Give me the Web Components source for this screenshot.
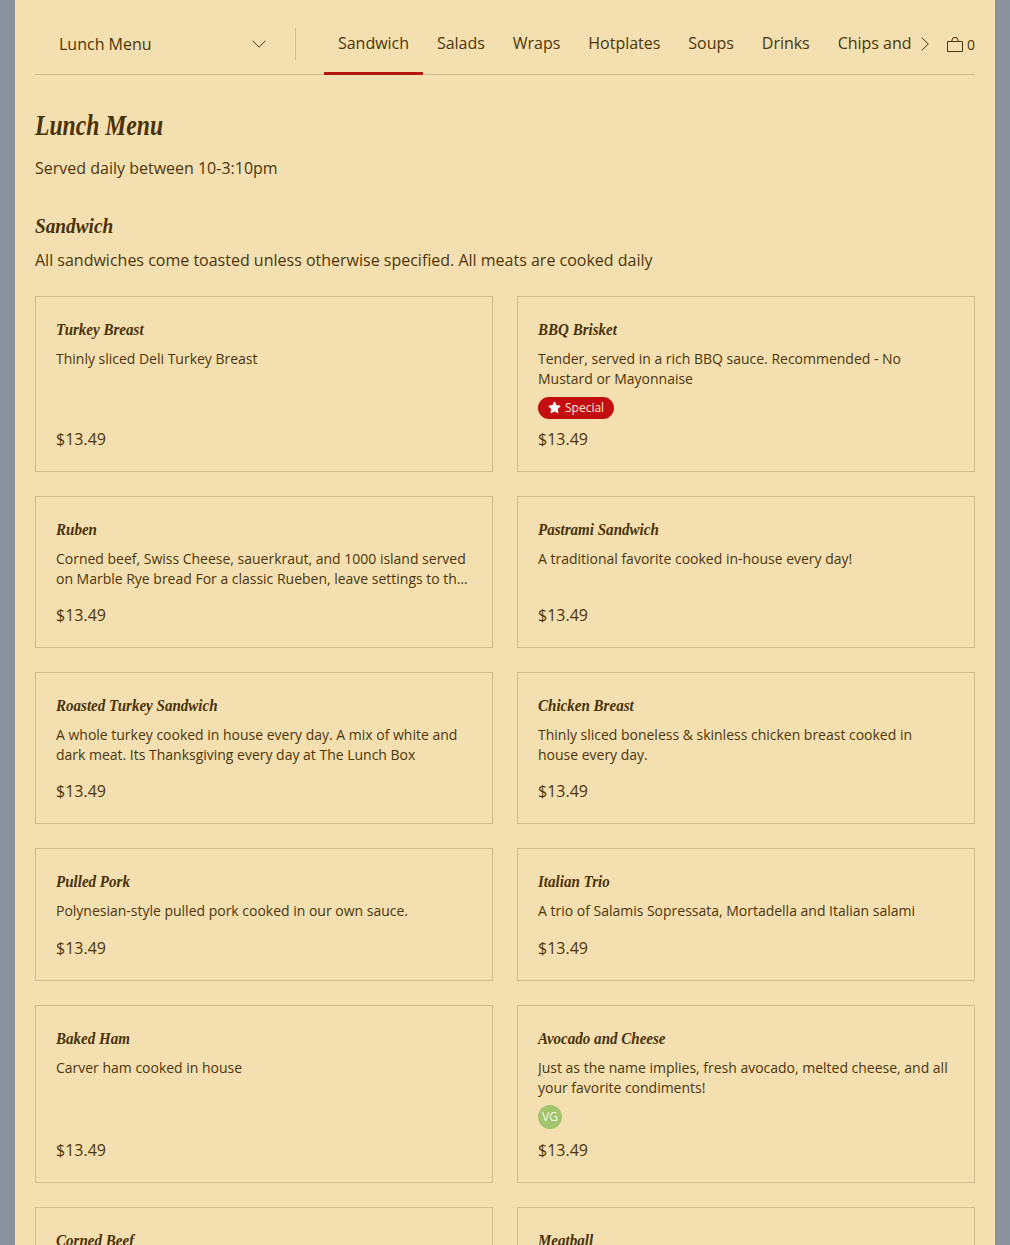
<!DOCTYPE html>
<html lang="en"><head><meta charset="utf-8"><title>Lunch Menu</title>
<style>
html,body{margin:0;padding:0;height:1245px;overflow:hidden;background:#8b929f}
body{font-family:"Open Sans","Liberation Sans",sans-serif;color:#4c360c}
</style></head><body>
<menu-app>
  <menu-header slot="header"></menu-header>
  <menu-intro title="Lunch Menu" note="Served daily between 10-3:10pm"></menu-intro>
  <menu-section title="Sandwich" note="All sandwiches come toasted unless otherwise specified. All meats are cooked daily">
    <menu-card title="Turkey Breast" desc="Thinly sliced Deli Turkey Breast"></menu-card>
    <menu-card title="BBQ Brisket" desc="Tender, served in a rich BBQ sauce. Recommended - No Mustard or Mayonnaise"><tag-special></tag-special></menu-card>
    <menu-card title="Ruben" desc="Corned beef, Swiss Cheese, sauerkraut, and 1000 island served on Marble Rye bread For a classic Rueben, leave settings to the chef and enjoy every bite of it."></menu-card>
    <menu-card title="Pastrami Sandwich" desc="A traditional favorite cooked in-house every day!"></menu-card>
    <menu-card title="Roasted Turkey Sandwich" desc="A whole turkey cooked in house every day. A mix of white and dark meat. Its Thanksgiving every day at The Lunch Box"></menu-card>
    <menu-card title="Chicken Breast" desc="Thinly sliced boneless &amp; skinless chicken breast cooked in house every day."></menu-card>
    <menu-card title="Pulled Pork" desc="Polynesian-style pulled pork cooked in our own sauce."></menu-card>
    <menu-card title="Italian Trio" desc="A trio of Salamis Sopressata, Mortadella and Italian salami"></menu-card>
    <menu-card title="Baked Ham" desc="Carver ham cooked in house"></menu-card>
    <menu-card title="Avocado and Cheese" desc="Just as the name implies, fresh avocado, melted cheese, and all your favorite condiments!"><tag-vg></tag-vg></menu-card>
    <menu-card title="Corned Beef" desc="Slow cooked corned beef"></menu-card>
    <menu-card title="Meatball" desc="House made meatballs"></menu-card>
  </menu-section>
</menu-app>
<script>
const SCRIPT='"Liberation Serif","DejaVu Serif",serif';
function def(name,html,init){
  customElements.define(name,class extends HTMLElement{
    constructor(){super();this.attachShadow({mode:'open'}).innerHTML=html;}
    connectedCallback(){if(init)init(this,this.shadowRoot);}
  });
}
def('menu-app',`<style>
:host{display:block;width:980px;height:1245px;margin:0 auto;background:#f4dfb0;box-sizing:border-box;padding:0 20px;overflow:hidden}
</style><slot name="header"></slot><slot></slot>`);

def('menu-header',`<style>
:host{display:flex;height:75px;box-sizing:border-box;border-bottom:1px solid #cfbb8e;align-items:stretch;color:#4c360c}
.sel{width:260px;flex:none;display:flex;align-items:center;justify-content:space-between;box-sizing:border-box;padding:14px 29px 0 24px;font-size:16px;height:74px}
.div{width:1px;background:#d2bf94;height:32px;margin-top:28px;flex:none}
.tabs{margin-left:28px;width:587px;flex:none;display:flex;overflow:hidden;height:75px;font-size:16px;letter-spacing:-.025px}
.tab{flex:none;padding:0 14px;box-sizing:border-box;height:75px;line-height:86px;white-space:nowrap}
.tab.on{border-bottom:3px solid #b3170f}
.next{flex:none;width:28px;display:flex;align-items:center;justify-content:center;padding-top:14px;box-sizing:border-box;height:74px}
.bag{flex:1;display:flex;align-items:center;justify-content:flex-end;gap:4px;padding-top:14px;box-sizing:border-box;height:74px;font-size:14px}
svg{display:block}
</style>
<div class="sel"><span>Lunch Menu</span><svg width="14" height="8" viewBox="0 0 14 8" fill="none" stroke="#4c360c" stroke-width="1"><path d="M.5 .7 7 7.200 13.500 .7"/></svg></div>
<div class="div"></div>
<div class="tabs"><div class="tab on">Sandwich</div><div class="tab">Salads</div><div class="tab">Wraps</div><div class="tab">Hotplates</div><div class="tab">Soups</div><div class="tab">Drinks</div><div class="tab">Chips and Sides</div></div>
<div class="next"><svg width="8" height="14" viewBox="0 0 8 14" fill="none" stroke="#4c360c" stroke-width="1"><path d="M.7 .5 7.300 7 .7 13.500"/></svg></div>
<div class="bag"><svg width="16" height="15" viewBox="0 0 16 15" fill="none" stroke="#4c360c" stroke-width="1"><path d="M.5 4.500h15v10H.5z"/><path d="M4.500 4.500 6 .7h4l1.500 3.800"/></svg><span>0</span></div>`);

def('menu-intro',`<style>
:host{display:block}
h1{margin:0;font:italic bold 29px/36px ${SCRIPT};color:#4a3208;padding-top:32px}
h1 span{display:inline-block;transform:scaleX(.815);transform-origin:0 50%}
p{margin:13px 0 0;font-size:16px;line-height:24px}
</style><h1><span></span></h1><p></p>`,(e,s)=>{s.querySelector('span').textContent=e.getAttribute('title');s.querySelector('p').textContent=e.getAttribute('note');});

def('menu-section',`<style>
:host{display:block}
h2{margin:32px 0 0;font:italic bold 21px/28px ${SCRIPT};color:#4a3208}
h2 span{display:inline-block;transform:scaleX(.918);transform-origin:0 50%}
p{margin:8px 0 0;font-size:16px;line-height:24px}
.grid{display:grid;grid-template-columns:458px 458px;gap:24px;margin-top:24px}
</style><h2><span></span></h2><p></p><div class="grid"><slot></slot></div>`,(e,s)=>{s.querySelector('span').textContent=e.getAttribute('title');s.querySelector('p').textContent=e.getAttribute('note');});

def('menu-card',`<style>
:host{display:flex;flex-direction:column;box-sizing:border-box;border:1px solid #cfbb8e;padding:20px}
h3{margin:0;height:24px;font:italic bold 16px/26px ${SCRIPT};color:#4a3208}
h3 span{display:inline-block;transform:scaleX(.94);transform-origin:0 50%;white-space:nowrap}
.d{margin:8px 0 0;font-size:14px;line-height:19.6px;letter-spacing:-.01px;display:-webkit-box;-webkit-line-clamp:2;-webkit-box-orient:vertical;overflow:hidden}
.t{display:none}
.t.has{display:block;margin-top:8.800px;line-height:0}
.p{margin-top:auto;padding-top:15px;font-size:16px;line-height:24px}
.t.has + .p{padding-top:8px}
</style><h3><span></span></h3><div class="d"></div><div class="t"><slot></slot></div><div class="p">$13.49</div>`,(e,s)=>{
  s.querySelector('span').textContent=e.getAttribute('title');
  s.querySelector('.d').textContent=e.getAttribute('desc');
  if(e.children.length)s.querySelector('.t').classList.add('has');
});

def('tag-special',`<style>
:host{display:inline-flex;align-items:center;gap:4px;height:22px;box-sizing:border-box;padding:0 10px;border-radius:11px;background:#c30d10;color:#fbe6de;font-size:12px;line-height:22px;vertical-align:top}
svg{display:block}
</style><svg width="13" height="13" viewBox="0 0 24 24"><path fill="#fff" stroke="#fff" stroke-width="2.500" stroke-linejoin="round" d="M12 2.500l2.900 6.300 6.800.9-5 4.700 1.300 6.800-6-3.400-6 3.400 1.300-6.800-5-4.700 6.800-.9z"/></svg><span>Special</span>`);

def('tag-vg',`<style>
:host{display:inline-flex;align-items:center;justify-content:center;width:24px;height:24px;margin:-.8px 0 .8px;border-radius:50%;background:#a2c46d;color:#f6f6e6;font-size:12px;line-height:24px;vertical-align:top}
</style><span>VG</span>`);
</script>
</body></html>
